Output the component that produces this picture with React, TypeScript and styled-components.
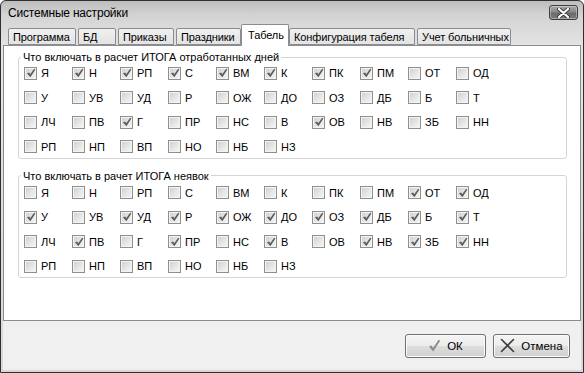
import styled, { createGlobalStyle } from "styled-components";

const GlobalStyle = createGlobalStyle`
  html, body {
    margin: 0;
    padding: 0;
    background: #ffffff;
  }
  body {
    font-family: "Liberation Sans", Arial, sans-serif;
    color: #000;
  }
`;

const Window = styled.div`
  box-sizing: border-box;
  width: 584px;
  height: 373px;
  display: flex;
  flex-direction: column;
  border: 1px solid #2f2f2f;
  border-radius: 6px 6px 0 0;
  padding: 0 2px 2px;
  overflow: hidden;
  background: linear-gradient(#bdbdbd 0, #d3d3d3 14px, #dcdcdc 30px, #e4e4e4 46px, #d8d8d8 100%);
`;

const TitleBar = styled.div`
  height: 26px;
  flex: none;
  display: flex;
  align-items: flex-start;
  justify-content: space-between;
  padding: 0 3px 0 5px;
`;

const Title = styled.div`
  padding-top: 5px;
  font-size: 12px;
  line-height: 15px;
  letter-spacing: -0.2px;
`;

const CloseButton = styled.div`
  margin-top: 4px;
  width: 29px;
  height: 15px;
  box-sizing: border-box;
  border: 1px solid #3f3f3f;
  border-radius: 3px;
  background: linear-gradient(#a8a8a8 0, #8a8a8a 45%, #6a6a6a 55%, #7c7c7c 100%);
  box-shadow: inset 0 0 0 1px rgba(255, 255, 255, 0.35);
  display: flex;
  align-items: center;
  justify-content: center;
`;

const Client = styled.div`
  flex: 1;
  display: flex;
  flex-direction: column;
`;

const TabStrip = styled.div`
  height: 18px;
  flex: none;
  display: flex;
  align-items: flex-end;
  padding-left: 5px;
  position: relative;
  z-index: 1;
`;

const Tab = styled.div<{ $width: number; $active?: boolean }>`
  box-sizing: border-box;
  width: ${(p) => p.$width + (p.$active ? 4 : 0)}px;
  height: ${(p) => (p.$active ? 22 : 17)}px;
  margin: ${(p) => (p.$active ? "0 0 -1px -2px" : "0 2px 0 0")};
  padding: ${(p) => (p.$active ? "3px 0 0 6px" : "1px 0 0 4px")};
  border: 1px solid #8a8c92;
  border-bottom: ${(p) => (p.$active ? "none" : "1px solid #8a8c92")};
  border-radius: 2px 2px 0 0;
  background: ${(p) => (p.$active ? "#ffffff" : "linear-gradient(#f0f0f0, #e3e3e3)")};
  font-size: 11px;
  line-height: 14px;
  letter-spacing: -0.1px;
  white-space: nowrap;
`;

const Panel = styled.div`
  box-sizing: border-box;
  height: 276px;
  flex: none;
  background: #ffffff;
  border: 1px solid #8a8c92;
  padding: 4px 13px 0 14px;
  display: flex;
  flex-direction: column;
  gap: 10px;
`;

const Group = styled.fieldset<{ $first?: boolean }>`
  margin: 0;
  min-width: 0;
  border: 1px solid #d5d5d5;
  border-radius: 3px;
  padding: ${(p) => (p.$first ? "1px 5px 3px" : "2px 5px 3px")};
`;

const Legend = styled.legend`
  margin-left: -3px;
  padding: 0 2px;
  font-size: 11px;
  line-height: 14px;
`;

const Grid = styled.div`
  display: grid;
  grid-template-columns: repeat(10, 48px);
  grid-auto-rows: 16px;
  row-gap: 8.5px;
`;

const Item = styled.div`
  display: flex;
  align-items: center;
  gap: 4px;
  font-size: 11px;
  white-space: nowrap;
`;

const Box = styled.span<{ $checked: boolean }>`
  box-sizing: border-box;
  width: 13px;
  height: 13px;
  flex: none;
  border: 1px solid #8e8f8f;
  background: linear-gradient(135deg, #cdcdcd 0%, #e6e6e6 55%, #f6f6f6 100%);
  box-shadow: inset 0 0 0 1px #f4f4f4;
  display: flex;
  align-items: center;
  justify-content: center;
`;

const BottomBar = styled.div`
  flex: 1;
  background: #f0f0f0;
  display: flex;
  align-items: center;
  justify-content: flex-end;
  gap: 7px;
  padding-right: 11px;
`;

const Button = styled.div<{ $width: number }>`
  box-sizing: border-box;
  width: ${(p) => p.$width}px;
  height: 24px;
  border: 1px solid #707070;
  border-radius: 3px;
  background: linear-gradient(#f4f4f4 0, #ececec 48%, #dddddd 52%, #d0d0d0 100%);
  box-shadow: inset 0 0 0 1px #fbfbfb;
  display: flex;
  align-items: center;
  justify-content: center;
  gap: 6px;
  font-size: 11.5px;
`;

const Check = () => (
  <svg width="10" height="10" viewBox="0 0 10 10">
    <path d="M1 5.2 L3.2 4.4 L4.2 6.2 L8.2 0.8 L9.4 1.6 L4.4 9.2 Z" fill="#5c5c5c" />
  </svg>
);

const rows = [
  ["Я", "Н", "РП", "С", "ВМ", "К", "ПК", "ПМ", "ОТ", "ОД"],
  ["У", "УВ", "УД", "Р", "ОЖ", "ДО", "ОЗ", "ДБ", "Б", "Т"],
  ["ЛЧ", "ПВ", "Г", "ПР", "НС", "В", "ОВ", "НВ", "ЗБ", "НН"],
  ["РП", "НП", "ВП", "НО", "НБ", "НЗ"],
];

const worked = [
  [1, 1, 1, 1, 1, 1, 1, 1, 0, 0],
  [0, 0, 0, 0, 0, 0, 0, 0, 0, 0],
  [0, 0, 1, 0, 0, 0, 1, 0, 0, 0],
  [0, 0, 0, 0, 0, 0],
];

const absence = [
  [0, 0, 0, 0, 0, 0, 0, 0, 1, 1],
  [1, 0, 1, 1, 1, 1, 1, 1, 1, 1],
  [0, 1, 0, 1, 0, 1, 0, 1, 1, 1],
  [0, 0, 0, 0, 0, 0],
];

const tabs = [
  { label: "Программа", width: 68 },
  { label: "БД", width: 38 },
  { label: "Приказы", width: 56 },
  { label: "Праздники", width: 65 },
  { label: "Табель", width: 44, active: true },
  { label: "Конфигурация табеля", width: 126 },
  { label: "Учет больничных", width: 94 },
];

const CodeGroup = ({ title, marks, first }: { title: string; marks: number[][]; first?: boolean }) => (
  <Group $first={first}>
    <Legend>{title}</Legend>
    <Grid>
      {rows.map((row, r) =>
        row.map((code, c) => (
          <Item key={`${r}-${c}`}>
            <Box $checked={!!marks[r][c]}>{marks[r][c] ? <Check /> : null}</Box>
            {code}
          </Item>
        ))
      )}
    </Grid>
  </Group>
);

export default function App() {
  return (
    <>
      <GlobalStyle />
      <Window>
        <TitleBar>
          <Title>Системные настройки</Title>
          <CloseButton>
            <svg width="13" height="10" viewBox="0 0 13 10">
              <path d="M2 1 L11 9 M11 1 L2 9" stroke="#3a3a3a" strokeWidth="4" strokeLinecap="round" />
              <path d="M2 1 L11 9 M11 1 L2 9" stroke="#ffffff" strokeWidth="2.2" strokeLinecap="round" />
            </svg>
          </CloseButton>
        </TitleBar>
        <Client>
          <TabStrip>
            {tabs.map((t) => (
              <Tab key={t.label} $width={t.width} $active={t.active}>
                {t.label}
              </Tab>
            ))}
          </TabStrip>
          <Panel>
            <CodeGroup first title="Что включать в расчет ИТОГА отработанных дней" marks={worked} />
            <CodeGroup title="Что включать в рачет ИТОГА неявок" marks={absence} />
          </Panel>
          <BottomBar>
            <Button $width={81}>
              <svg width="13" height="13" viewBox="0 0 13 13">
                <path d="M1 7.5 L3.6 6.6 L5 9 L10.6 0.8 L12.2 1.8 L5.2 12.4 Z" fill="#8c8c8c" />
              </svg>
              ОК
            </Button>
            <Button $width={77}>
              <svg width="15" height="15" viewBox="0 0 15 15">
                <path d="M1.5 1.5 L13.5 13.5 M13.5 1.5 L1.5 13.5" stroke="#3c3c3c" strokeWidth="1.6" strokeLinecap="round" />
              </svg>
              Отмена
            </Button>
          </BottomBar>
        </Client>
      </Window>
    </>
  );
}
